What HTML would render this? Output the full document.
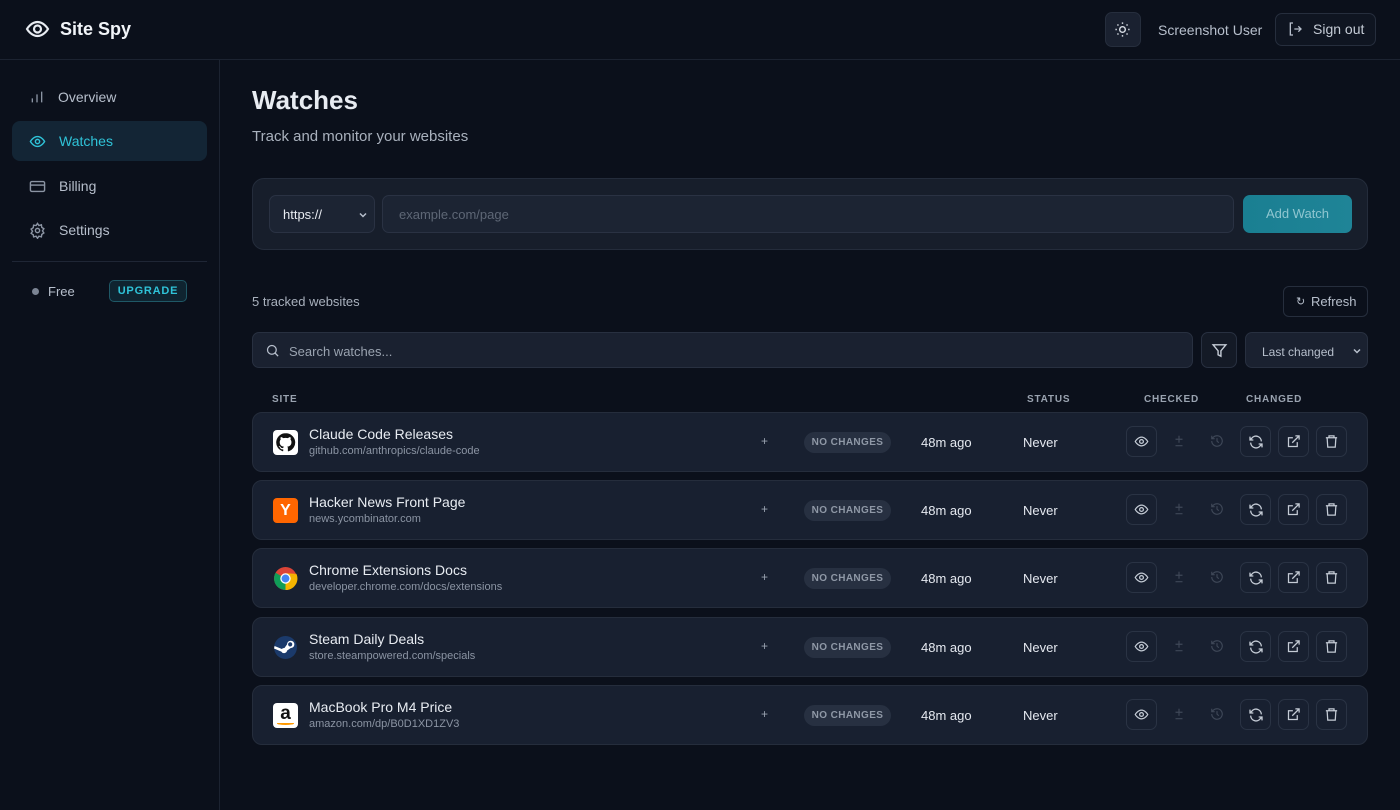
<!DOCTYPE html>
<html><head><meta charset="utf-8"><style>
*{box-sizing:border-box;margin:0;padding:0}
body{width:1400px;height:810px;background:#0b101b;font-family:"Liberation Sans",sans-serif;color:#e5e9f0;position:relative;overflow:hidden}
.abs{position:absolute}
.hdr{left:0;top:0;width:1400px;height:60px;border-bottom:1px solid #1c2331}
.side{left:0;top:60px;width:220px;height:750px;border-right:1px solid #1c2331}
.nav{position:absolute;left:12px;width:195px;height:40px;display:flex;align-items:center;padding-left:17px;font-size:14px;color:#b7bfcc;gap:13px}
.nav.act{background:#132535;color:#2fc3d8;border-radius:8px}
svg{display:block}
.card{background:#171e2b;border:1px solid #242c3b}
.row{position:absolute;left:252px;width:1116px;height:60px;background:#182030;border:1px solid #252d3c;border-radius:10px}
.row .fav{position:absolute;left:20px;top:17px;width:25px;height:25px;border-radius:4px;overflow:hidden}
.row .t{position:absolute;left:56px;top:13px;font-size:14px;color:#e8ecf2}
.row .u{position:absolute;left:56px;top:32px;font-size:11px;color:#8b94a3}
.row .plus{position:absolute;left:508px;top:21px;font-size:12px;color:#9aa3b0}
.row .badge{position:absolute;left:551px;top:19px;width:87px;height:21px;border-radius:11px;background:#273041;color:#8f98a6;font-size:10px;font-weight:bold;text-align:center;line-height:21px;letter-spacing:.4px}
.row .ago{position:absolute;left:668px;top:22px;font-size:13px;color:#e5e9f0}
.row .nev{position:absolute;left:770px;top:22px;font-size:13px;color:#e5e9f0}
.btn{position:absolute;top:13px;width:31px;height:31px;border:1px solid #2a3344;border-radius:7px;display:flex;align-items:center;justify-content:center}
.ic{position:absolute;top:21px}
.th{position:absolute;top:394px;font-size:10px;font-weight:bold;color:#9aa3b0;letter-spacing:.8px}
</style></head><body>
<div class="abs hdr">
 <svg class="abs" style="left:25px;top:17px" width="25" height="24" viewBox="0 0 24 24" fill="none" stroke="#e8ecf2" stroke-width="2.2"><path d="M1.5 12s4-7 10.5-7 10.5 7 10.5 7-4 7-10.5 7S1.5 12 1.5 12z"/><circle cx="12" cy="12" r="3.5"/></svg>
 <div class="abs" style="left:60px;top:19px;font-size:18px;font-weight:bold;color:#f1f4f8">Site Spy</div>
 <div class="abs" style="left:1105px;top:12px;width:36px;height:35px;background:#1a2130;border:1px solid #262e3d;border-radius:7px"><svg style="margin:8px" width="17" height="17" viewBox="0 0 24 24" fill="none" stroke="#d8dde5" stroke-width="2"><circle cx="12" cy="12" r="4"/><path d="M12 2v2M12 20v2M4.9 4.9l1.4 1.4M17.7 17.7l1.4 1.4M2 12h2M20 12h2M4.9 19.1l1.4-1.4M17.7 6.3l1.4-1.4"/></svg></div>
 <div class="abs" style="left:1158px;top:22px;font-size:14px;color:#b7bfcc">Screenshot User</div>
 <div class="abs" style="left:1275px;top:13px;width:101px;height:33px;border:1px solid #262e3d;border-radius:7px;background:#0f1521"><svg class="abs" style="left:11px;top:7px" width="16" height="16" viewBox="0 0 24 24" fill="none" stroke="#b7bfcc" stroke-width="2"><path d="M9 3H5v18h4M11 12h10M17 8l4 4-4 4"/></svg><span class="abs" style="left:37px;top:7px;font-size:14px;color:#c5ccd6">Sign out</span></div>
</div>
<div class="abs side">
 <div class="nav" style="top:17px"><svg width="16" height="16" viewBox="0 0 24 24" fill="none" stroke="#8b94a3" stroke-width="2"><path d="M5 20v-6M12 20V8M19 20V4"/></svg>Overview</div>
 <div class="nav act" style="top:61px"><svg width="17" height="17" viewBox="0 0 24 24" fill="none" stroke="#2fc3d8" stroke-width="2"><path d="M2 12s4-7 10-7 10 7 10 7-4 7-10 7S2 12 2 12z"/><circle cx="12" cy="12" r="3"/></svg>Watches</div>
 <div class="nav" style="top:106px"><svg width="17" height="17" viewBox="0 0 24 24" fill="none" stroke="#8b94a3" stroke-width="2"><rect x="2" y="5" width="20" height="14" rx="2"/><path d="M2 10h20"/></svg>Billing</div>
 <div class="nav" style="top:150px"><svg width="17" height="17" viewBox="0 0 24 24" fill="none" stroke="#8b94a3" stroke-width="2"><circle cx="12" cy="12" r="3"/><path d="M12 2l2 3 3.5-1 .5 3.5 3 2-2 3 2 3-3 2-.5 3.5-3.5-1-2 3-2-3-3.5 1L6 18l-3-2 2-3-2-3 3-2 .5-3.5L10 5z"/></svg>Settings</div>
 <div class="abs" style="left:12px;top:201px;width:195px;height:1px;background:#1f2635"></div>
 <div class="abs" style="left:32px;top:228px;width:7px;height:7px;border-radius:50%;background:#7b8493"></div>
 <div class="abs" style="left:48px;top:224px;font-size:13px;color:#b7bfcc">Free</div>
 <div class="abs" style="left:109px;top:220px;width:78px;height:22px;border:1px solid #1f5866;background:#0f2430;border-radius:5px;font-size:11px;font-weight:bold;color:#2fc3d8;text-align:center;line-height:20px;letter-spacing:.8px">UPGRADE</div>
</div>
<div class="abs" style="left:252px;top:85px;font-size:26px;font-weight:bold;color:#e8ecf2">Watches</div>
<div class="abs" style="left:252px;top:128px;font-size:15px;color:#a9b1bd">Track and monitor your websites</div>
<div class="abs card" style="left:252px;top:178px;width:1116px;height:72px;border-radius:12px">
 <div class="abs" style="left:16px;top:16px;width:106px;height:38px;background:#1c2433;border:1px solid #2a3243;border-radius:7px"><span class="abs" style="left:13px;top:11px;font-size:13px;color:#e8ecf2">https://</span><svg class="abs" style="left:88px;top:14px" width="10" height="10" viewBox="0 0 10 10" fill="none" stroke="#b7bfcc" stroke-width="1.5"><path d="M2 3.5l3 3 3-3"/></svg></div>
 <div class="abs" style="left:129px;top:16px;width:852px;height:38px;background:#1c2433;border:1px solid #2a3243;border-radius:7px"><span class="abs" style="left:16px;top:11px;font-size:13px;color:#5e6776">example.com/page</span></div>
 <div class="abs" style="left:990px;top:16px;width:109px;height:38px;background:linear-gradient(90deg,#1a7f92,#1f8497);border-radius:7px;font-size:13px;color:#8fc6d0;text-align:center;line-height:38px">Add Watch</div>
</div>
<div class="abs" style="left:252px;top:294px;font-size:13px;color:#a9b1bd">5 tracked websites</div>
<div class="abs" style="left:1283px;top:286px;width:85px;height:31px;border:1px solid #262e3d;border-radius:6px;font-size:13px;color:#b7bfcc"><span class="abs" style="left:12px;top:8px;font-size:11px">↻</span><span class="abs" style="left:27px;top:7px">Refresh</span></div>
<div class="abs" style="left:252px;top:332px;width:941px;height:36px;background:#1a2130;border:1px solid #283040;border-radius:7px"><svg class="abs" style="left:12px;top:10px" width="15" height="15" viewBox="0 0 24 24" fill="none" stroke="#b7bfcc" stroke-width="2"><circle cx="11" cy="11" r="7"/><path d="M16 16l5 5"/></svg><span class="abs" style="left:36px;top:11px;font-size:13px;color:#9aa3b0">Search watches...</span></div>
<div class="abs" style="left:1201px;top:332px;width:36px;height:36px;background:#141a26;border:1px solid #283040;border-radius:7px"><svg class="abs" style="left:9px;top:9px" width="17" height="17" viewBox="0 0 24 24" fill="none" stroke="#c5ccd6" stroke-width="2"><path d="M3 4h18l-7 8.5V20l-4-2v-5.5z"/></svg></div>
<div class="abs" style="left:1245px;top:332px;width:123px;height:36px;background:#1a2130;border:1px solid #283040;border-radius:7px"><span class="abs" style="left:16px;top:12px;font-size:12px;color:#b7bfcc">Last changed</span><svg class="abs" style="left:106px;top:13px" width="10" height="10" viewBox="0 0 10 10" fill="none" stroke="#b7bfcc" stroke-width="1.5"><path d="M2 3.5l3 3 3-3"/></svg></div>
<div class="th" style="left:272px">SITE</div>
<div class="th" style="left:1027px">STATUS</div>
<div class="th" style="left:1144px">CHECKED</div>
<div class="th" style="left:1246px">CHANGED</div>

<div class="row" style="top:412px">
 <div class="fav" style="background:#fff"><svg style="margin:2px" width="21" height="21" viewBox="0 0 24 24"><path fill="#111" d="M12 1.5A10.5 10.5 0 0 0 8.7 22c.5.1.7-.2.7-.5v-1.8c-2.9.6-3.5-1.4-3.5-1.4-.5-1.2-1.2-1.5-1.2-1.5-.9-.6.1-.6.1-.6 1 .1 1.6 1 1.6 1 .9 1.6 2.5 1.2 3.1.9.1-.7.4-1.2.7-1.4-2.3-.3-4.8-1.200-4.8-5.2 0-1.1.4-2.1 1.1-2.8-.1-.3-.5-1.3.1-2.8 0 0 .9-.3 2.9 1.1a10 10 0 0 1 5.2 0c2-1.4 2.9-1.1 2.9-1.1.6 1.5.2 2.5.1 2.8.7.7 1.1 1.7 1.1 2.8 0 4-2.5 4.9-4.8 5.2.4.3.7 1 .7 2v2.9c0 .3.2.6.7.5A10.5 10.5 0 0 0 12 1.5z"/></svg></div>
 <div class="t">Claude Code Releases</div><div class="u">github.com/anthropics/claude-code</div>
 <div class="plus">+</div><div class="badge">NO CHANGES</div><div class="ago">48m ago</div><div class="nev">Never</div>
 <div class="btn" style="left:873px"><svg width="15" height="15" viewBox="0 0 24 24" fill="none" stroke="#c5ccd6" stroke-width="2"><path d="M2 12s4-7 10-7 10 7 10 7-4 7-10 7S2 12 2 12z"/><circle cx="12" cy="12" r="3"/></svg></div>
 <div class="ic" style="left:919px"><svg width="14" height="14" viewBox="0 0 24 24" fill="none" stroke="#3e4757" stroke-width="2"><path d="M12 3v12M6 9h12M6 20h12"/></svg></div>
 <div class="ic" style="left:957px"><svg width="14" height="14" viewBox="0 0 24 24" fill="none" stroke="#3e4757" stroke-width="2"><path d="M3 12a9 9 0 1 0 3-6.7L3 8M3 3v5h5M12 7v5l3 3"/></svg></div>
 <div class="btn" style="left:987px"><svg width="16" height="16" viewBox="0 0 24 24" fill="none" stroke="#c5ccd6" stroke-width="2"><path d="M20 11a8 8 0 0 0-14.5-4.5L3 9M3 4v5h5M4 13a8 8 0 0 0 14.5 4.5L21 15M21 20v-5h-5"/></svg></div>
 <div class="btn" style="left:1025px"><svg width="15" height="15" viewBox="0 0 24 24" fill="none" stroke="#c5ccd6" stroke-width="2"><path d="M18 13v7H4V6h7M15 3h6v6M10 14L21 3"/></svg></div>
 <div class="btn" style="left:1063px"><svg width="15" height="15" viewBox="0 0 24 24" fill="none" stroke="#c5ccd6" stroke-width="2"><path d="M3 6h18M8 6V3h8v3M5 6l1 15h12l1-15"/></svg></div>
</div>

<div class="row" style="top:480px">
 <div class="fav" style="background:#ff6600;color:#fff;font-size:16px;font-weight:bold;text-align:center;line-height:25px">Y</div>
 <div class="t">Hacker News Front Page</div><div class="u">news.ycombinator.com</div>
 <div class="plus">+</div><div class="badge">NO CHANGES</div><div class="ago">48m ago</div><div class="nev">Never</div>
 <div class="btn" style="left:873px"><svg width="15" height="15" viewBox="0 0 24 24" fill="none" stroke="#c5ccd6" stroke-width="2"><path d="M2 12s4-7 10-7 10 7 10 7-4 7-10 7S2 12 2 12z"/><circle cx="12" cy="12" r="3"/></svg></div>
 <div class="ic" style="left:919px"><svg width="14" height="14" viewBox="0 0 24 24" fill="none" stroke="#3e4757" stroke-width="2"><path d="M12 3v12M6 9h12M6 20h12"/></svg></div>
 <div class="ic" style="left:957px"><svg width="14" height="14" viewBox="0 0 24 24" fill="none" stroke="#3e4757" stroke-width="2"><path d="M3 12a9 9 0 1 0 3-6.7L3 8M3 3v5h5M12 7v5l3 3"/></svg></div>
 <div class="btn" style="left:987px"><svg width="16" height="16" viewBox="0 0 24 24" fill="none" stroke="#c5ccd6" stroke-width="2"><path d="M20 11a8 8 0 0 0-14.5-4.5L3 9M3 4v5h5M4 13a8 8 0 0 0 14.5 4.5L21 15M21 20v-5h-5"/></svg></div>
 <div class="btn" style="left:1025px"><svg width="15" height="15" viewBox="0 0 24 24" fill="none" stroke="#c5ccd6" stroke-width="2"><path d="M18 13v7H4V6h7M15 3h6v6M10 14L21 3"/></svg></div>
 <div class="btn" style="left:1063px"><svg width="15" height="15" viewBox="0 0 24 24" fill="none" stroke="#c5ccd6" stroke-width="2"><path d="M3 6h18M8 6V3h8v3M5 6l1 15h12l1-15"/></svg></div>
</div>

<div class="row" style="top:548px">
 <div class="fav"><svg width="25" height="25" viewBox="0 0 24 24"><circle cx="12" cy="12" r="11" fill="#db4437"/><path d="M12 12L2.5 6.5A11 11 0 0 0 12 23z" fill="#0f9d58"/><path d="M12 12L12 23A11 11 0 0 0 22.5 7.5z" fill="#f4b400"/><path d="M12 12L22.5 7.5 L12 7z" fill="#f4b400"/><circle cx="12" cy="12" r="5" fill="#fff"/><circle cx="12" cy="12" r="3.8" fill="#4285f4"/></svg></div>
 <div class="t">Chrome Extensions Docs</div><div class="u">developer.chrome.com/docs/extensions</div>
 <div class="plus">+</div><div class="badge">NO CHANGES</div><div class="ago">48m ago</div><div class="nev">Never</div>
 <div class="btn" style="left:873px"><svg width="15" height="15" viewBox="0 0 24 24" fill="none" stroke="#c5ccd6" stroke-width="2"><path d="M2 12s4-7 10-7 10 7 10 7-4 7-10 7S2 12 2 12z"/><circle cx="12" cy="12" r="3"/></svg></div>
 <div class="ic" style="left:919px"><svg width="14" height="14" viewBox="0 0 24 24" fill="none" stroke="#3e4757" stroke-width="2"><path d="M12 3v12M6 9h12M6 20h12"/></svg></div>
 <div class="ic" style="left:957px"><svg width="14" height="14" viewBox="0 0 24 24" fill="none" stroke="#3e4757" stroke-width="2"><path d="M3 12a9 9 0 1 0 3-6.7L3 8M3 3v5h5M12 7v5l3 3"/></svg></div>
 <div class="btn" style="left:987px"><svg width="16" height="16" viewBox="0 0 24 24" fill="none" stroke="#c5ccd6" stroke-width="2"><path d="M20 11a8 8 0 0 0-14.5-4.5L3 9M3 4v5h5M4 13a8 8 0 0 0 14.5 4.5L21 15M21 20v-5h-5"/></svg></div>
 <div class="btn" style="left:1025px"><svg width="15" height="15" viewBox="0 0 24 24" fill="none" stroke="#c5ccd6" stroke-width="2"><path d="M18 13v7H4V6h7M15 3h6v6M10 14L21 3"/></svg></div>
 <div class="btn" style="left:1063px"><svg width="15" height="15" viewBox="0 0 24 24" fill="none" stroke="#c5ccd6" stroke-width="2"><path d="M3 6h18M8 6V3h8v3M5 6l1 15h12l1-15"/></svg></div>
</div>

<div class="row" style="top:617px">
 <div class="fav"><svg width="25" height="25" viewBox="0 0 24 24"><circle cx="12" cy="12" r="11" fill="#1b3a6b"/><path d="M1 13l7 3a3 3 0 0 0 5.5-1l3.5-2.5A3.5 3.5 0 1 0 13.5 9l-2.5 3.5a3 3 0 0 0-2.5 1L1.5 10.5z" fill="#fff"/><circle cx="16.5" cy="9" r="2" fill="#1b3a6b"/></svg></div>
 <div class="t">Steam Daily Deals</div><div class="u">store.steampowered.com/specials</div>
 <div class="plus">+</div><div class="badge">NO CHANGES</div><div class="ago">48m ago</div><div class="nev">Never</div>
 <div class="btn" style="left:873px"><svg width="15" height="15" viewBox="0 0 24 24" fill="none" stroke="#c5ccd6" stroke-width="2"><path d="M2 12s4-7 10-7 10 7 10 7-4 7-10 7S2 12 2 12z"/><circle cx="12" cy="12" r="3"/></svg></div>
 <div class="ic" style="left:919px"><svg width="14" height="14" viewBox="0 0 24 24" fill="none" stroke="#3e4757" stroke-width="2"><path d="M12 3v12M6 9h12M6 20h12"/></svg></div>
 <div class="ic" style="left:957px"><svg width="14" height="14" viewBox="0 0 24 24" fill="none" stroke="#3e4757" stroke-width="2"><path d="M3 12a9 9 0 1 0 3-6.7L3 8M3 3v5h5M12 7v5l3 3"/></svg></div>
 <div class="btn" style="left:987px"><svg width="16" height="16" viewBox="0 0 24 24" fill="none" stroke="#c5ccd6" stroke-width="2"><path d="M20 11a8 8 0 0 0-14.5-4.5L3 9M3 4v5h5M4 13a8 8 0 0 0 14.5 4.5L21 15M21 20v-5h-5"/></svg></div>
 <div class="btn" style="left:1025px"><svg width="15" height="15" viewBox="0 0 24 24" fill="none" stroke="#c5ccd6" stroke-width="2"><path d="M18 13v7H4V6h7M15 3h6v6M10 14L21 3"/></svg></div>
 <div class="btn" style="left:1063px"><svg width="15" height="15" viewBox="0 0 24 24" fill="none" stroke="#c5ccd6" stroke-width="2"><path d="M3 6h18M8 6V3h8v3M5 6l1 15h12l1-15"/></svg></div>
</div>

<div class="row" style="top:685px">
 <div class="fav" style="background:#fff;color:#111;font-size:19px;font-weight:bold;text-align:center;line-height:22px">a<div style="position:absolute;left:4px;top:19px;width:17px;height:3px;border-bottom:2px solid #f90;border-radius:0 0 50% 50%"></div></div>
 <div class="t">MacBook Pro M4 Price</div><div class="u">amazon.com/dp/B0D1XD1ZV3</div>
 <div class="plus">+</div><div class="badge">NO CHANGES</div><div class="ago">48m ago</div><div class="nev">Never</div>
 <div class="btn" style="left:873px"><svg width="15" height="15" viewBox="0 0 24 24" fill="none" stroke="#c5ccd6" stroke-width="2"><path d="M2 12s4-7 10-7 10 7 10 7-4 7-10 7S2 12 2 12z"/><circle cx="12" cy="12" r="3"/></svg></div>
 <div class="ic" style="left:919px"><svg width="14" height="14" viewBox="0 0 24 24" fill="none" stroke="#3e4757" stroke-width="2"><path d="M12 3v12M6 9h12M6 20h12"/></svg></div>
 <div class="ic" style="left:957px"><svg width="14" height="14" viewBox="0 0 24 24" fill="none" stroke="#3e4757" stroke-width="2"><path d="M3 12a9 9 0 1 0 3-6.7L3 8M3 3v5h5M12 7v5l3 3"/></svg></div>
 <div class="btn" style="left:987px"><svg width="16" height="16" viewBox="0 0 24 24" fill="none" stroke="#c5ccd6" stroke-width="2"><path d="M20 11a8 8 0 0 0-14.5-4.5L3 9M3 4v5h5M4 13a8 8 0 0 0 14.5 4.5L21 15M21 20v-5h-5"/></svg></div>
 <div class="btn" style="left:1025px"><svg width="15" height="15" viewBox="0 0 24 24" fill="none" stroke="#c5ccd6" stroke-width="2"><path d="M18 13v7H4V6h7M15 3h6v6M10 14L21 3"/></svg></div>
 <div class="btn" style="left:1063px"><svg width="15" height="15" viewBox="0 0 24 24" fill="none" stroke="#c5ccd6" stroke-width="2"><path d="M3 6h18M8 6V3h8v3M5 6l1 15h12l1-15"/></svg></div>
</div>
</body></html>
